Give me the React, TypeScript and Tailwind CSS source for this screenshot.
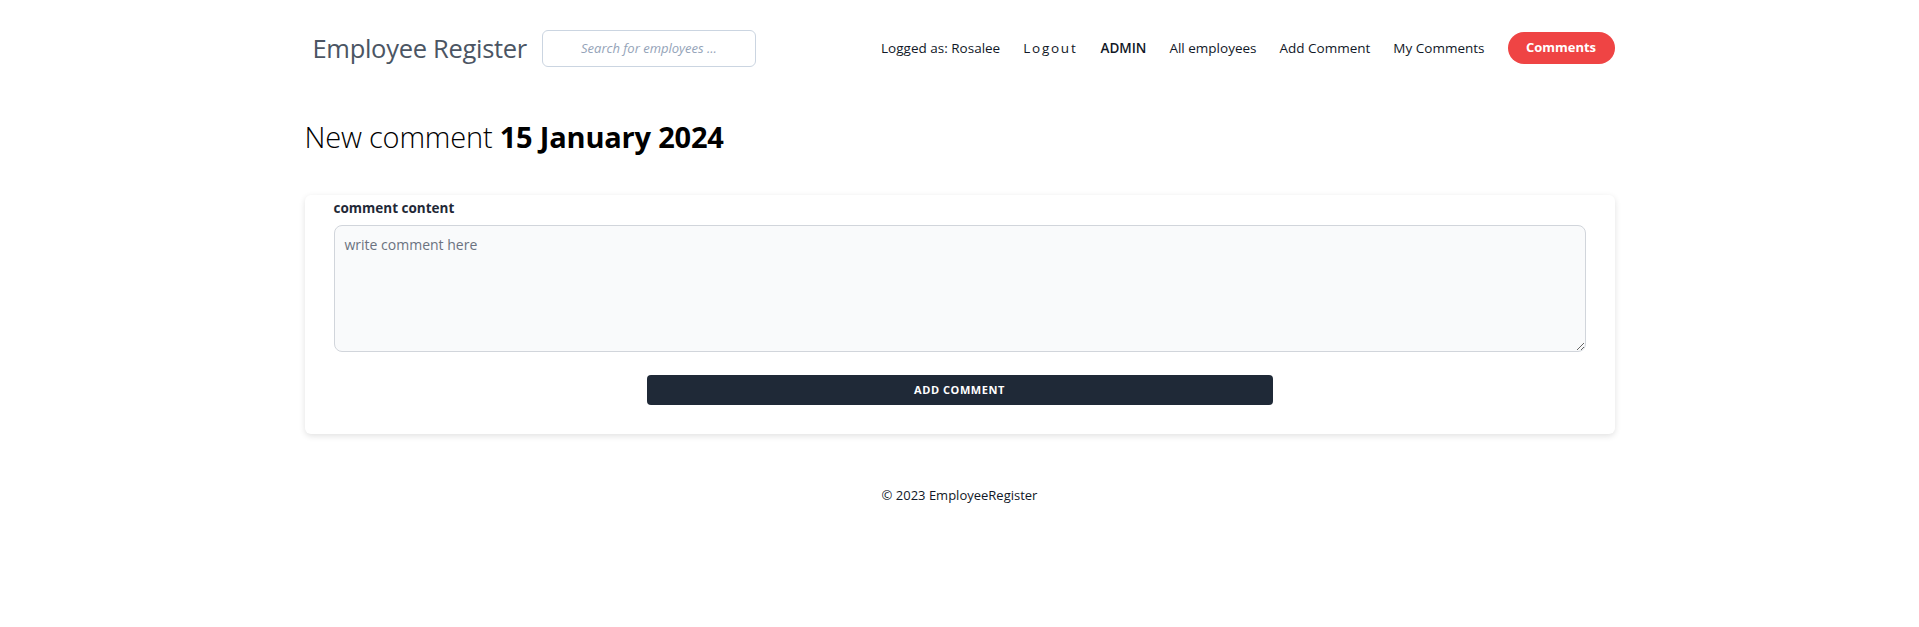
import { useState } from 'react';

const navLinks = ['All employees', 'Add Comment', 'My Comments'];

function Header() {
  return (
    <header className="flex h-[96px] items-center justify-between">
      <div className="flex items-center gap-[15px] pl-2">
        <a href="#" className="text-[25.5px] text-[#4b5563] tracking-[-0.3px]">
          Employee Register
        </a>
        <input
          type="text"
          placeholder="Search for employees ..."
          className="h-[37px] w-[214px] rounded-md border border-[#cbd5e1] bg-white px-3 text-center text-[13px] italic outline-none placeholder:text-[#94a3b8]"
        />
      </div>
      <nav className="flex items-center gap-[23px] text-[13.5px] text-[#111827]">
        <span>Logged as: Rosalee</span>
        <a href="#" className="tracking-[0.13em]">Logout</a>
        <a href="#" className="font-semibold">ADMIN</a>
        {navLinks.map((link) => (
          <a key={link} href="#">
            {link}
          </a>
        ))}
        <a
          href="#"
          className="flex h-[32px] w-[107px] items-center justify-center rounded-full bg-[#ef4444] text-[13px] font-bold text-white"
        >
          Comments
        </a>
      </nav>
    </header>
  );
}

export default function App() {
  const [comment, setComment] = useState('');

  return (
    <div
      className="min-h-screen bg-white text-black"
      style={{ fontFamily: '"Open Sans", "Noto Sans", sans-serif' }}
    >
      <div className="mx-auto w-[1310px]">
        <Header />

        <h1 className="mt-[23px] text-[29px] leading-[36px] tracking-[-0.2px]">
          <span className="font-light">New comment </span>
          <span className="font-bold">15 January 2024</span>
        </h1>

        {/* Comment form */}
        <form
          className="mt-[40px] rounded-md bg-white px-[29px] pt-[3px] pb-[29px] shadow-[0_2px_6px_rgba(0,0,0,0.12)]"
          onSubmit={(e) => e.preventDefault()}
        >
          <label htmlFor="comment" className="block text-[13.5px] font-bold leading-[20px] text-[#1f2937]">
            comment content
          </label>
          <textarea
            id="comment"
            value={comment}
            onChange={(e) => setComment(e.target.value)}
            placeholder="write comment here"
            className="mt-[7px] block h-[127px] w-full rounded-lg border border-[#d1d5db] bg-[#f9fafb] px-2.5 py-2 text-[14px] text-gray-900 outline-none placeholder:text-[#6b7280]"
          />
          <button
            type="submit"
            className="mx-auto mt-[23px] block h-[30px] w-1/2 rounded bg-[#1f2937] text-[11px] font-bold uppercase tracking-wider text-white"
          >
            Add comment
          </button>
        </form>

        <footer className="mt-[51px] text-center text-[13px] leading-[20px] text-[#111827]">
          © 2023 EmployeeRegister
        </footer>
      </div>
    </div>
  );
}
